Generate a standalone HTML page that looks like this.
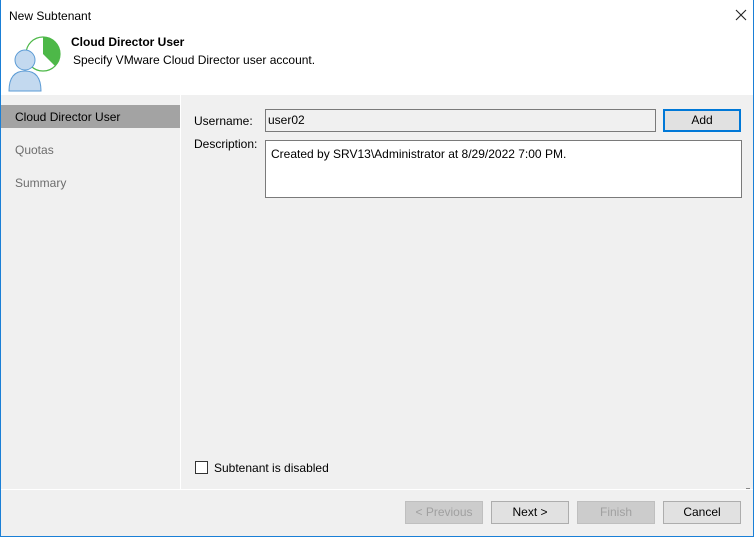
<!DOCTYPE html><html><head><style>
*{box-sizing:border-box}
body{margin:0;width:754px;height:537px;overflow:hidden;font-family:"Liberation Sans",sans-serif;font-size:12px;color:#000}
.win{position:absolute;left:0;top:0;width:754px;height:537px;border:1px solid #1a7fd6;border-top:none;background:#f0f0f0}
.abs{position:absolute}
.btn{position:absolute;top:501px;width:78px;height:23px;border:1px solid #adadad;background:#e1e1e1;text-align:center;line-height:21px;font-size:12px}
.dis{background:#cccccc;border-color:#bfbfbf;color:#a0a0a0}
</style></head><body><div class="win">
<div class="abs" style="left:0;top:0;width:752px;height:95px;background:#fff"></div>
<div class="abs" style="left:8px;top:9px;font-size:12px">New Subtenant</div>
<svg class="abs" style="left:734px;top:9px" width="12" height="12"><path d="M1 1L11 11M11 1L1 11" stroke="#222" stroke-width="1.1"/></svg>
<svg class="abs" style="left:6px;top:34px" width="56" height="58" viewBox="0 0 56 58">
<circle cx="36" cy="20" r="17" fill="#fff" stroke="#4db848" stroke-width="1.2"/>
<path d="M36 3 A17 17 0 0 1 48 32 L36 20 Z" fill="#4db848"/>
<circle cx="18" cy="26" r="10" fill="#c3d9ef" stroke="#5b9bd5"/>
<path d="M2 57 Q2 37 18 37 Q34 37 34 57 Z" fill="#c3d9ef" stroke="#5b9bd5"/>
</svg>
<div class="abs" style="left:70px;top:35px;font-weight:bold">Cloud Director User</div>
<div class="abs" style="left:72px;top:53px">Specify VMware Cloud Director user account.</div>
<div class="abs" style="left:179px;top:95px;width:1px;height:394px;background:#fff"></div>
<div class="abs" style="left:0;top:489px;width:752px;height:1px;background:#fff"></div>
<div class="abs" style="left:0px;top:105px;width:179px;height:23px;background:#a3a3a3"></div>
<div class="abs" style="left:14px;top:110px">Cloud Director User</div>
<div class="abs" style="left:14px;top:143px;color:#6d6d6d">Quotas</div>
<div class="abs" style="left:14px;top:176px;color:#6d6d6d">Summary</div>
<div class="abs" style="left:193px;top:114px">Username:</div>
<div class="abs" style="left:193px;top:137px">Description:</div>
<div class="abs" style="left:264px;top:109px;width:391px;height:23px;border:1px solid #7a7a7a;background:#f0f0f0;line-height:21px;padding-left:2px">user02</div>
<div class="abs" style="left:662px;top:109px;width:78px;height:23px;border:2px solid #0078d7;background:#e1e1e1;text-align:center;line-height:19px">Add</div>
<div class="abs" style="left:264px;top:140px;width:477px;height:58px;border:1px solid #7a7a7a;background:#fff"><div style="padding:6px 5px">Created by SRV13\Administrator at 8/29/2022 7:00 PM.</div></div>
<div class="abs" style="left:194px;top:461px;width:13px;height:13px;border:1px solid #333;background:#fff"></div>
<div class="abs" style="left:213px;top:461px">Subtenant is disabled</div>
<div class="abs" style="left:745px;top:488px;width:4px;height:1px;background:#888"></div>
<div class="btn dis" style="left:404px">&lt; Previous</div>
<div class="btn" style="left:490px">Next &gt;</div>
<div class="btn dis" style="left:576px">Finish</div>
<div class="btn" style="left:662px">Cancel</div>
</div></body></html>
